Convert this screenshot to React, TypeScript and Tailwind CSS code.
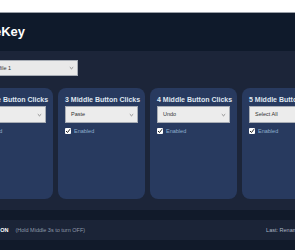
import React from 'react';

const cards = [
  { title: '2 Middle Button Clicks', action: 'Copy' },
  { title: '3 Middle Button Clicks', action: 'Paste' },
  { title: '4 Middle Button Clicks', action: 'Undo' },
  { title: '5 Middle Button Clicks', action: 'Select All' },
];

function Chevron() {
  return (
    <svg width="5" height="4" viewBox="0 0 5 4" className="shrink-0">
      <path d="M0.8 1.2 L2.5 2.8 L4.2 1.2" fill="none" stroke="#777" strokeWidth="0.8" />
    </svg>
  );
}

function Check() {
  return (
    <span className="flex h-[6px] w-[6px] shrink-0 items-center justify-center rounded-[1px] bg-white">
      <svg width="6" height="6" viewBox="0 0 6 6">
        <path d="M1 3 L2.5 4.5 L5 1.2" fill="none" stroke="#222" strokeWidth="1" />
      </svg>
    </span>
  );
}

function ActionCard({ title, action }: { title: string; action: string }) {
  return (
    <div className="flex h-[111px] w-[87px] shrink-0 flex-col rounded-[8px] bg-[#283a5f] px-[7px] pt-[7px]">
      <div className="whitespace-nowrap text-[7px] font-bold leading-[9px] text-[#dfe6f0]">{title}</div>
      <div className="mt-[2px] flex h-[17px] items-center justify-between border border-[#a8adb5] bg-[#ececec] pl-[5px] pr-[3px]">
        <span className="whitespace-nowrap text-[5.5px] text-[#333]">{action}</span>
        <Chevron />
      </div>
      <div className="mt-[5px] flex items-center gap-[3px]">
        <Check />
        <span className="text-[5.5px] leading-[6px] text-[#8fb0cf]">Enabled</span>
      </div>
    </div>
  );
}

export default function App() {
  return (
    <div className="h-[250px] w-[295px] overflow-hidden bg-white font-['Liberation_Sans',sans-serif]">
      <div className="h-[13px] border-b border-[#9aa0a8] bg-white" />
      <header className="flex h-[38px] items-center bg-[#0f1a2b]">
        <h1 className="ml-[-40px] whitespace-nowrap text-[13px] font-bold text-white">MiddleKey</h1>
      </header>
      <main className="h-[159px] bg-[#1c2539] pt-[9px]">
        <div className="ml-[-15px] flex h-[16px] w-[93px] items-center justify-between border border-[#a8adb5] bg-[#e9e9e9] pl-[5px] pr-[3px]">
          <span className="whitespace-nowrap text-[5.5px] text-[#333]">Profile 1</span>
          <Chevron />
        </div>
        <div className="ml-[-34px] mt-[12px] flex gap-[5px]">
          {cards.map((c) => (
            <ActionCard key={c.title} title={c.title} action={c.action} />
          ))}
        </div>
      </main>
      <div className="h-[10px] bg-[#111a2a]" />
      <footer className="flex h-[20px] items-center whitespace-nowrap bg-[#1b2437] text-[5.5px]">
        <span className="ml-[-20px] font-bold text-white">Status: ON</span>
        <span className="ml-[7px] text-[#8d99aa]">(Hold Middle 3s to turn OFF)</span>
        <span className="ml-[181px] text-[#aab5c3]">Last: Renamed Profile</span>
      </footer>
      <div className="h-[10px] bg-[#111a2a]" />
    </div>
  );
}
